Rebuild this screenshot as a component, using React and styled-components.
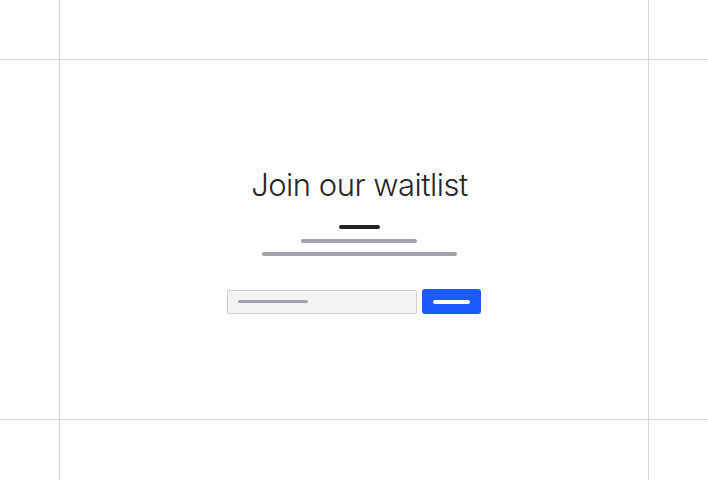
import React from 'react';
import styled, { createGlobalStyle } from 'styled-components';

const GlobalStyle = createGlobalStyle`
  html, body {
    margin: 0;
    padding: 0;
    background: #ffffff;
  }
  body {
    font-family: Inter, "Liberation Sans", sans-serif;
  }
`;

const Frame = styled.div`
  display: grid;
  grid-template-columns: 59px 1fr 59px;
  grid-template-rows: 59px 1fr 60px;
  width: 100%;
  height: 100vh;
  box-sizing: border-box;
`;

const Cell = styled.div`
  box-sizing: border-box;
  ${({ $mid }) => $mid && 'border-left: 1px solid #d6d6da; border-right: 1px solid #d6d6da;'}
  ${({ $row }) => $row && 'border-top: 1px solid #d6d6da; border-bottom: 1px solid #d6d6da;'}
`;

const Stage = styled(Cell)`
  display: flex;
  flex-direction: column;
  align-items: center;
  padding-top: 105px;
`;

const Header = styled.div`
  display: flex;
  flex-direction: column;
  align-items: center;
  padding-left: 11px;
`;

const Title = styled.h1`
  margin: 0;
  font-family: Inter, "Liberation Sans", sans-serif;
  font-weight: 300;
  font-size: 31px;
  line-height: 40px;
  letter-spacing: -0.5px;
  color: #27272a;
`;

const Bar = styled.div`
  width: ${({ $w }) => $w}px;
  height: ${({ $h = 4 }) => $h}px;
  margin-top: ${({ $gap }) => $gap}px;
  border-radius: 2px;
  background: ${({ $tone }) => $tone};
`;

const Form = styled.div`
  display: flex;
  align-items: center;
  gap: 5px;
  margin-top: 33px;
`;

const Field = styled.div`
  display: flex;
  align-items: center;
  box-sizing: border-box;
  width: 190px;
  height: 24px;
  padding-left: 10px;
  background: #f3f3f4;
  border: 1px solid #cdcdd1;
  border-radius: 2px;
`;

const Submit = styled.div`
  display: flex;
  align-items: center;
  justify-content: center;
  box-sizing: border-box;
  width: 59px;
  height: 25px;
  background: #1a5cff;
  border-radius: 3px;
`;

export default function App() {
  return (
    <>
      <GlobalStyle />
      <Frame>
        <Cell />
        <Cell $mid />
        <Cell />
        <Cell $row />
        <Stage $mid $row>
          <Header>
            <Title>Join our waitlist</Title>
            <Bar $w={41} $gap={20} $tone="#232326" />
            <Bar $w={116} $gap={10} $tone="#a3a2ab" />
            <Bar $w={195} $gap={9} $tone="#a3a2ab" />
          </Header>
          <Form>
            <Field>
              <Bar $w={70} $h={3} $gap={0} $tone="#a3a2ab" />
            </Field>
            <Submit>
              <Bar $w={37} $h={4} $gap={0} $tone="#ffffff" />
            </Submit>
          </Form>
        </Stage>
        <Cell $row />
        <Cell />
        <Cell $mid />
        <Cell />
      </Frame>
    </>
  );
}
